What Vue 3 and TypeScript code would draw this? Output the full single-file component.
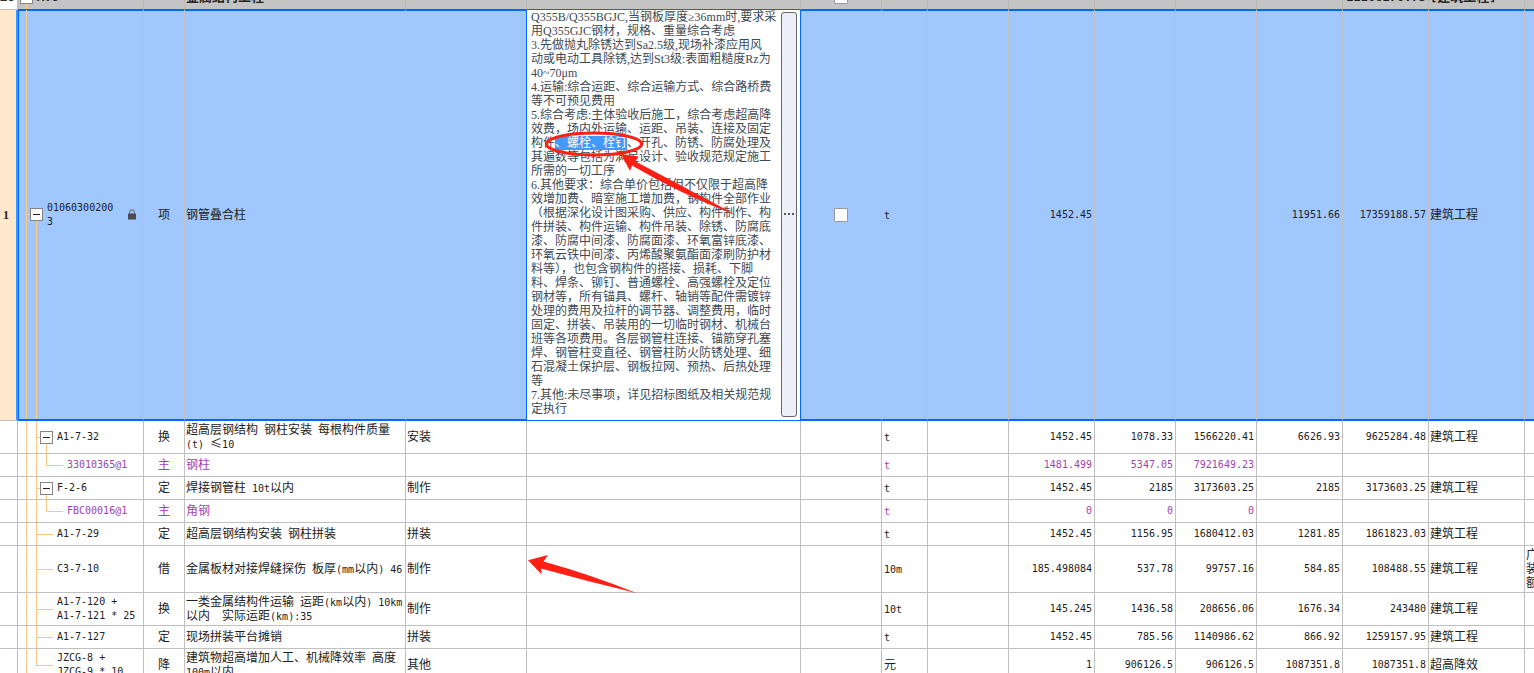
<script setup lang="ts">
import { onMounted, ref } from 'vue'

interface Row {
  no?: string
  level: number
  kind: 'group' | 'item' | 'sub' | 'material'
  size: 'group' | 'item' | 'double' | 'single' | 'triple'
  open?: boolean
  last?: boolean
  code: string[]
  type: string
  name: string[]
  remark?: string
  check?: boolean
  unit: string
  nums: string[]
  major: string
  source?: string[]
}

const rows: Row[] = [
  { no: 'B1', level: 0, kind: 'group', size: 'group', open: true, code: ['A.6'], type: '', name: ['金属结构工程'], check: true, unit: '', nums: ['', '', '', '', '22208270.73'], major: '[建筑工程]' },
  { no: '1', level: 1, kind: 'item', size: 'item', open: true, code: ['01060300200', '3'], type: '项', name: ['钢管叠合柱'], check: true, unit: 't', nums: ['1452.45', '', '', '11951.66', '17359188.57'], major: '建筑工程' },
  { level: 2, kind: 'sub', size: 'double', open: true, code: ['A1-7-32'], type: '换', name: ['超高层钢结构 钢柱安装 每根构件质量', '(t) ≤10'], remark: '安装', unit: 't', nums: ['1452.45', '1078.33', '1566220.41', '6626.93', '9625284.48'], major: '建筑工程' },
  { level: 3, kind: 'material', size: 'single', code: ['33010365@1'], type: '主', name: ['钢柱'], unit: 't', nums: ['1481.499', '5347.05', '7921649.23', '', ''], major: '' },
  { level: 2, kind: 'sub', size: 'single', open: true, code: ['F-2-6'], type: '定', name: ['焊接钢管柱 10t以内'], remark: '制作', unit: 't', nums: ['1452.45', '2185', '3173603.25', '2185', '3173603.25'], major: '建筑工程' },
  { level: 3, kind: 'material', size: 'single', code: ['FBC00016@1'], type: '主', name: ['角钢'], unit: 't', nums: ['0', '0', '0', '', ''], major: '' },
  { level: 2, kind: 'sub', size: 'single', code: ['A1-7-29'], type: '定', name: ['超高层钢结构安装 钢柱拼装'], remark: '拼装', unit: 't', nums: ['1452.45', '1156.95', '1680412.03', '1281.85', '1861823.03'], major: '建筑工程' },
  { level: 2, kind: 'sub', size: 'triple', code: ['C3-7-10'], type: '借', name: ['金属板材对接焊缝探伤 板厚(mm以内) 46'], remark: '制作', unit: '10m', nums: ['185.498084', '537.78', '99757.16', '584.85', '108488.55'], major: '建筑工程', source: ['广东省安', '装工程定', '额'] },
  { level: 2, kind: 'sub', size: 'double', code: ['A1-7-120 +', 'A1-7-121 * 25'], type: '换', name: ['一类金属结构件运输 运距(km以内) 10km', '以内  实际运距(km):35'], remark: '制作', unit: '10t', nums: ['145.245', '1436.58', '208656.06', '1676.34', '243480'], major: '建筑工程' },
  { level: 2, kind: 'sub', size: 'single', code: ['A1-7-127'], type: '定', name: ['现场拼装平台摊销'], remark: '拼装', unit: 't', nums: ['1452.45', '785.56', '1140986.62', '866.92', '1259157.95'], major: '建筑工程' },
  { level: 2, kind: 'sub', size: 'double', last: true, code: ['JZCG-8 +', 'JZCG-9 * 10'], type: '降', name: ['建筑物超高增加人工、机械降效率 高度', '100m以内'], remark: '其他', unit: '元', nums: ['1', '906126.5', '906126.5', '1087351.8', '1087351.8'], major: '超高降效' },
]

const feature = ref(`Q355B/Q355BGJC,当钢板厚度≥36mm时,要求采
用Q355GJC钢材，规格、重量综合考虑
3.先做抛丸除锈达到Sa2.5级,现场补漆应用风
动或电动工具除锈,达到St3级:表面粗糙度Rz为
40~70μm
4.运输:综合运距、综合运输方式、综合路桥费
等不可预见费用
5.综合考虑:主体验收后施工，综合考虑超高降
效费，场内外运输、运距、吊装、连接及固定
构件、螺栓、栓钉、开孔、防锈、防腐处理及
其遍数等包括为满足设计、验收规范规定施工
所需的一切工序
6.其他要求：综合单价包括但不仅限于超高降
效增加费、暗室施工增加费，钢构件全部作业
（根据深化设计图采购、供应、构件制作、构
件拼装、构件运输、构件吊装、除锈、防腐底
漆、防腐中间漆、防腐面漆、环氧富锌底漆、
环氧云铁中间漆、丙烯酸聚氨酯面漆刷防护材
料等），也包含钢构件的搭接、损耗、下脚
料、焊条、铆钉、普通螺栓、高强螺栓及定位
钢材等，所有锚具、螺杆、轴销等配件需镀锌
处理的费用及拉杆的调节器、调整费用，临时
固定、拼装、吊装用的一切临时钢材、机械台
班等各项费用。各层钢管柱连接、锚筋穿孔塞
焊、钢管柱变直径、钢管柱防火防锈处理、细
石混凝土保护层、钢板拉网、预热、后热处理
等
7.其他:未尽事项，详见招标图纸及相关规范规
定执行`)

const selectedPhrase = '、螺栓、栓钉'
const editor = ref<HTMLTextAreaElement[]>([])

// Half-width and full-width characters use different faces, so text is split into runs.
function runs(text: string) {
  return (text.match(/[\x20-\x7e]+|[^\x20-\x7e]+/g) ?? []).map((part) => ({
    part,
    half: /^[\x20-\x7e]/.test(part),
  }))
}

onMounted(() => {
  const box = editor.value[0]
  if (!box) return
  const start = feature.value.indexOf(selectedPhrase)
  box.focus({ preventScroll: true })
  box.setSelectionRange(start, start + selectedPhrase.length)
})
</script>

<template>
  <main class="sheet">
    <table class="grid">
      <colgroup>
        <col class="c-no" /><col class="c-code" /><col class="c-type" /><col class="c-name" />
        <col class="c-remark" /><col class="c-feature" /><col class="c-check" /><col class="c-unit" />
        <col class="c-expr" /><col class="c-qty" /><col class="c-price" /><col class="c-total" />
        <col class="c-comp" /><col class="c-sum" /><col class="c-major" /><col />
      </colgroup>
      <tbody>
        <tr v-for="(row, i) in rows" :key="i" :class="[row.kind, 'h-' + row.size]">
          <th scope="row" class="no">{{ row.no }}</th>
          <td class="code">
            <div class="tree" :class="'lv' + row.level">
              <svg class="guides" aria-hidden="true">
                <g v-if="row.level === 0"><line x1="8.5" x2="8.5" y1="50%" y2="100%" /></g>
                <g v-else><line x1="8.5" x2="8.5" y1="0" y2="100%" /></g>
                <g v-if="row.level === 1">
                  <line x1="8" x2="14" y1="50%" y2="50%" />
                  <line x1="18.5" x2="18.5" y1="50%" y2="100%" />
                </g>
                <g v-if="row.level >= 2"><line x1="18.5" x2="18.5" y1="0" :y2="row.last ? '50%' : '100%'" /></g>
                <g v-if="row.level === 2">
                  <line x1="18" x2="35" y1="50%" y2="50%" />
                  <line v-if="row.open" x1="28.5" x2="28.5" y1="50%" y2="100%" />
                </g>
                <g v-if="row.level === 3">
                  <line x1="28.5" x2="28.5" y1="0" y2="50%" />
                  <line x1="28" x2="45" y1="50%" y2="50%" />
                </g>
              </svg>
              <div class="node">
                <button v-if="row.open" type="button" class="toggle" :aria-label="'折叠 ' + row.code.join('')">
                  <svg viewBox="0 0 13 13" aria-hidden="true"><path d="M3 6.5h7" /></svg>
                </button>
                <div class="lines half">
                  <div v-for="line in row.code" :key="line">{{ line }}</div>
                </div>
                <svg v-if="row.kind === 'item'" class="lock" viewBox="0 0 8 11" aria-hidden="true">
                  <path d="M1.7 5V3.2a2.3 2.3 0 0 1 4.6 0V5" fill="none" stroke="#777" stroke-width="1.1" />
                  <rect y="4.6" width="8" height="6" rx=".6" fill="#4c4c4c" />
                </svg>
              </div>
            </div>
          </td>
          <td class="type">{{ row.type }}</td>
          <td class="text">
            <div v-for="line in row.name" :key="line"><span v-for="(r, k) in runs(line)" :key="k" :class="{ half: r.half }">{{ r.part }}</span></div>
          </td>
          <td class="text remark">{{ row.remark }}</td>
          <td v-if="row.kind === 'item'" class="feature">
            <div class="editor">
              <textarea ref="editor" v-model="feature" aria-label="项目特征" spellcheck="false" wrap="off"></textarea>
              <button type="button" class="more" aria-label="更多">
                <svg viewBox="0 0 11 3" aria-hidden="true"><path d="M0 0h2v2H0zM4 0h2v2H4zM8 0h2v2H8z" /></svg>
              </button>
            </div>
          </td>
          <td v-else></td>
          <td class="check"><input v-if="row.check" type="checkbox" :aria-label="'锁定综合单价 ' + row.name[0]" /></td>
          <td class="unit"><span v-for="(r, k) in runs(row.unit)" :key="k" :class="{ half: r.half }">{{ r.part }}</span></td>
          <td></td>
          <td v-for="(n, k) in row.nums" :key="k" class="num half">{{ n }}</td>
          <td class="text"><span v-for="(r, k) in runs(row.major)" :key="k" :class="{ half: r.half }">{{ r.part }}</span></td>
          <td class="text source">
            <div v-for="line in row.source" :key="line">{{ line }}</div>
          </td>
        </tr>
      </tbody>
    </table>
    <svg class="marks" width="760" height="673" viewBox="0 0 760 673" aria-hidden="true">
      <ellipse cx="594" cy="144" rx="47.5" ry="11" />
      <path d="M621 154 638.5 156.5 635.5 161.5Q690 190 737 215.5Q680 194 632 165.5L630 171Z" />
      <path d="M528 560.3 548 555 543.5 561.5Q592 575 637 593.3Q590 582 541 568.5L541.7 574.5Z" />
    </svg>
  </main>
</template>

<style>
html,
body,
#app {
  height: 100%;
}
body {
  margin: 0;
  overflow: hidden;
}
</style>

<style scoped>
.sheet {
  position: relative;
  height: 100%;
  overflow: hidden;
  background: #fff;
  color: #222;
  font: 12px/14px 'Noto Sans CJK SC', sans-serif;
}
.half {
  font-family: 'DejaVu Sans Mono', monospace;
  font-size: 10px;
}
span.half {
  line-height: 0;
}
.grid {
  width: 100%;
  margin-top: -15px;
  table-layout: fixed;
  border-collapse: separate;
  border-spacing: 0;
}
.c-no { width: 18px; }
.c-code { width: 126px; }
.c-type { width: 41px; }
.c-name { width: 221px; }
.c-remark { width: 121px; }
.c-feature { width: 274px; }
.c-check { width: 81px; }
.c-unit { width: 46px; }
.c-expr { width: 81px; }
.c-qty { width: 86px; }
.c-price { width: 81px; }
.c-total { width: 81px; }
.c-comp { width: 86px; }
.c-sum { width: 86px; }
.c-major { width: 96px; }

td,
th {
  box-sizing: border-box;
  padding: 0 2px;
  border: solid #c0c0c0;
  border-width: 0 1px 1px 0;
  vertical-align: middle;
  white-space: pre;
  overflow: hidden;
}
td.text {
  padding: 0 2px 2px 1px;
}
td.type,
td.unit {
  padding-bottom: 2px;
}
td:last-child {
  border-right: 0;
}
.h-group > * { height: 25px; }
.h-single > * { height: 23px; }
.h-double > * { height: 33px; }
.h-triple > * { height: 47px; }
.h-item > * { height: 411px; }

th.no {
  padding: 0 0 0 3px;
  text-align: left;
  font-family: 'Liberation Serif', serif;
}
.group th.no {
  padding-left: 0;
}
td.code {
  padding: 0;
}
.type {
  text-align: center;
}
.num {
  text-align: right;
}
.check {
  text-align: center;
}
.material {
  color: #a23fb5;
}

.group td {
  background: #c4c4c4;
  border-right-color: #bbb;
  border-bottom-color: #0068ff;
  font-size: 13px;
  font-weight: bold;
}
.group td .half,
.group td.num {
  font-size: 12px;
}
.item td {
  background: #a0c8ff;
  border-bottom: 2px solid #0068ff;
  box-shadow: inset 0 1px #0068ff;
}
.item .no {
  background: #ffe8cc;
  border-right: 2px solid #3b96ff;
}
.item .code {
  border-left: 1px solid #0068ff;
}
.item .remark {
  border-right-color: #0068ff;
}
.item td.feature {
  padding: 0;
  background: #fff;
  box-shadow: none;
  border-right-color: #0068ff;
  border-bottom-width: 1px;
}

.tree {
  position: relative;
  height: 100%;
}
.guides {
  position: absolute;
  inset: 0;
  width: 100%;
  height: 100%;
  stroke: #ffc880;
  stroke-width: 1;
  shape-rendering: crispEdges;
}
.node {
  position: relative;
  display: flex;
  align-items: center;
  gap: 4px;
  height: 100%;
}
.lv0 .node { padding-left: 2px; }
.lv1 .node { padding-left: 11px; }
.lv2 .node { padding-left: 22px; }
.lv2 .lines:first-child { padding-left: 17px; }
.lv3 .node { padding-left: 49px; }
.item .guides { margin-left: -1px; }
.toggle {
  flex: none;
  display: flex;
  width: 13px;
  height: 13px;
  padding: 0;
  border: 1px solid #858585;
  background: #fff;
}
.toggle svg {
  width: 13px;
  height: 13px;
  margin: -1px;
  flex: none;
  stroke: #222;
  shape-rendering: crispEdges;
}
.lock {
  width: 8px;
  height: 11px;
  margin: 0 7px 0 auto;
}

.editor {
  display: flex;
  height: 100%;
}
textarea {
  flex: 1;
  min-width: 0;
  box-sizing: border-box;
  padding: 0 0 0 4px;
  border: 0;
  outline: 0;
  resize: none;
  overflow: hidden;
  white-space: pre;
  background: #fff;
  color: #404a55;
  font: 12px/14px 'Liberation Serif', 'Noto Sans CJK SC', serif;
}
textarea::selection {
  background: #409aff;
  color: #fff;
}
.more {
  display: flex;
  align-items: center;
  justify-content: center;
  width: 16px;
  margin: 2px 3px 3px 0;
  padding: 0;
  border: 1px solid #666;
  border-radius: 3px;
  background: #eceff8;
}
.more svg {
  flex: none;
  width: 11px;
  height: 3px;
  fill: #555;
}
input[type='checkbox'] {
  appearance: none;
  display: block;
  box-sizing: border-box;
  width: 14px;
  height: 14px;
  margin: 0 auto;
  border: 1px solid #999;
  border-radius: 1px;
  background: #fff;
}
.marks {
  position: absolute;
  top: 0;
  left: 0;
  fill: #ff2015;
  pointer-events: none;
}
.marks ellipse {
  fill: none;
  stroke: #ff2015;
  stroke-width: 3;
}
</style>
